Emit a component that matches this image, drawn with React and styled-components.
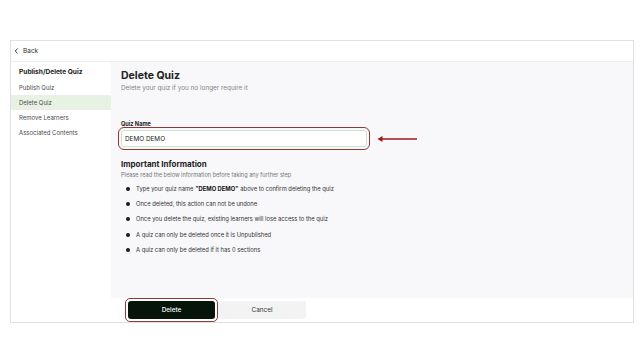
import styled, { createGlobalStyle } from 'styled-components';

const GlobalStyle = createGlobalStyle`
  html, body {
    margin: 0;
    padding: 0;
    background: #ffffff;
    font-family: Inter, "Liberation Sans", sans-serif;
    color: #222;
  }
  * { box-sizing: border-box; }
`;

const menuItems = [
  { id: 'publish', label: 'Publish Quiz' },
  { id: 'delete', label: 'Delete Quiz', active: true },
  { id: 'remove', label: 'Remove Learners' },
  { id: 'assoc', label: 'Associated Contents' },
];

const rules = [
  <>Type your quiz name <strong>"DEMO DEMO"</strong> above to confirm deleting the quiz</>,
  'Once deleted, this action can not be undone',
  'Once you delete the quiz, existing learners will lose access to the quiz',
  'A quiz can only be deleted once it is Unpublished',
  'A quiz can only be deleted if it has 0 sections',
];

const App = () => (
  <>
    <GlobalStyle />
    <Page>
      <Frame>
        <Header>
          <BackLink>
            <svg width="5" height="6" viewBox="0 0 5 6">
              <path d="M3.6 0.6 L1.2 3 L3.6 5.4" fill="none" stroke="#333" strokeWidth="1" />
            </svg>
            Back
          </BackLink>
        </Header>
        <Body>
          <Sidebar>
            <SidebarTitle>Publish/Delete Quiz</SidebarTitle>
            {menuItems.map((item) => (
              <MenuItem key={item.id} $active={item.active}>{item.label}</MenuItem>
            ))}
          </Sidebar>
          <Main>
            <Content>
              <Title>Delete Quiz</Title>
              <Subtitle>Delete your quiz if you no longer require it</Subtitle>

              <FieldLabel>Quiz Name</FieldLabel>
              <InputRow>
                <Highlight>
                  <NameInput defaultValue="DEMO DEMO" />
                </Highlight>
                <Arrow width="42" height="8" viewBox="0 0 42 8">
                  <path d="M4 4 H40" stroke="#9e1b1b" strokeWidth="1.6" />
                  <path d="M0.5 4 L5.5 1 L5.5 7 Z" fill="#9e1b1b" />
                </Arrow>
              </InputRow>

              <SectionTitle>Important Information</SectionTitle>
              <SectionText>Please read the below information before taking any further step</SectionText>
              <RuleList>
                {rules.map((rule, i) => (
                  <Rule key={i}>{rule}</Rule>
                ))}
              </RuleList>
            </Content>
            <Footer>
              <Highlight $button>
                <PrimaryButton>Delete</PrimaryButton>
              </Highlight>
              <SecondaryButton>Cancel</SecondaryButton>
            </Footer>
          </Main>
        </Body>
      </Frame>
    </Page>
  </>
);

const Page = styled.div`
  width: 644px;
  height: 362px;
  padding: 40px 11px 40px 10px;
`;

const Frame = styled.div`
  width: 624px;
  height: 283px;
  border: 1px solid #e1e1e3;
  display: flex;
  flex-direction: column;
  background: #fff;
`;

const Header = styled.div`
  height: 21px;
  flex-shrink: 0;
  border-bottom: 1px solid #eceef3;
  display: flex;
  align-items: center;
  padding-left: 3px;
`;

const BackLink = styled.div`
  display: flex;
  align-items: center;
  gap: 4px;
  font-size: 6.5px;
  color: #333;
`;

const Body = styled.div`
  flex: 1;
  display: flex;
  min-height: 0;
`;

const Sidebar = styled.nav`
  width: 100px;
  flex-shrink: 0;
  background: #fff;
  padding-top: 3px;
  display: flex;
  flex-direction: column;
`;

const SidebarTitle = styled.div`
  height: 15px;
  line-height: 15px;
  padding-left: 8px;
  font-size: 6.6px;
  font-weight: 700;
  color: #222;
`;

const MenuItem = styled.div`
  height: 15px;
  line-height: 15px;
  padding-left: 8px;
  font-size: 6px;
  color: #4a4a4a;
  background: ${(p) => (p.$active ? '#e7f2e5' : 'transparent')};
`;

const Main = styled.div`
  flex: 1;
  display: flex;
  flex-direction: column;
`;

const Content = styled.div`
  flex: 1;
  background: #f8f8fa;
  padding: 7px 10px 0 10px;
`;

const Title = styled.h1`
  margin: 0;
  font-size: 10.5px;
  line-height: 14px;
  font-weight: 700;
  color: #222;
`;

const Subtitle = styled.p`
  margin: 1px 0 0;
  font-size: 6.4px;
  line-height: 9px;
  color: #858585;
`;

const FieldLabel = styled.div`
  margin-top: 27px;
  font-size: 5.6px;
  line-height: 8px;
  font-weight: 700;
  color: #222;
`;

const InputRow = styled.div`
  margin-top: 2px;
  display: flex;
  align-items: center;
  gap: 10px;
`;

const Highlight = styled.div`
  position: relative;
  display: flex;

  &::after {
    content: '';
    position: absolute;
    inset: -3px;
    border: 1.3px solid #8c3a3a;
    border-radius: ${(p) => (p.$button ? '5px' : '6px')};
    pointer-events: none;
  }
`;

const NameInput = styled.input`
  width: 246px;
  height: 17px;
  border: 1px solid #cfe3cf;
  border-radius: 3px;
  background: #fff;
  padding: 0 3px;
  font-family: Inter, "Liberation Sans", sans-serif;
  font-size: 6.4px;
  color: #222;
  outline: none;
`;

const Arrow = styled.svg`
  display: block;
`;

const SectionTitle = styled.h2`
  margin: 12px 0 0;
  font-size: 8px;
  line-height: 10px;
  font-weight: 700;
  color: #222;
`;

const SectionText = styled.p`
  margin: 2px 0 0;
  font-size: 5.6px;
  line-height: 8px;
  color: #777;
`;

const RuleList = styled.ul`
  list-style: none;
  margin: 2px 0 0;
  padding: 0 0 0 5px;
`;

const Rule = styled.li`
  display: flex;
  align-items: center;
  height: 15.4px;
  font-size: 5.8px;
  line-height: 8px;
  color: #333;

  &::before {
    content: '';
    width: 4px;
    height: 4px;
    border-radius: 50%;
    background: #1a1a1a;
    margin-right: 6px;
    flex-shrink: 0;
  }

  strong {
    font-weight: 700;
    color: #111;
    margin: 0 2px;
  }
`;

const Footer = styled.div`
  height: 24px;
  flex-shrink: 0;
  background: #fff;
  display: flex;
  align-items: center;
  padding-left: 17px;
  gap: 3px;
`;

const PrimaryButton = styled.button`
  width: 87px;
  height: 18px;
  border: none;
  border-radius: 3px;
  background: #06140a;
  color: #fff;
  font-family: Inter, "Liberation Sans", sans-serif;
  font-size: 6.4px;
  font-weight: 500;
  cursor: pointer;
`;

const SecondaryButton = styled.button`
  width: 88px;
  height: 18px;
  border: none;
  border-radius: 3px;
  background: #f3f3f4;
  color: #333;
  font-family: Inter, "Liberation Sans", sans-serif;
  font-size: 6.4px;
  cursor: pointer;
`;

export default App;
